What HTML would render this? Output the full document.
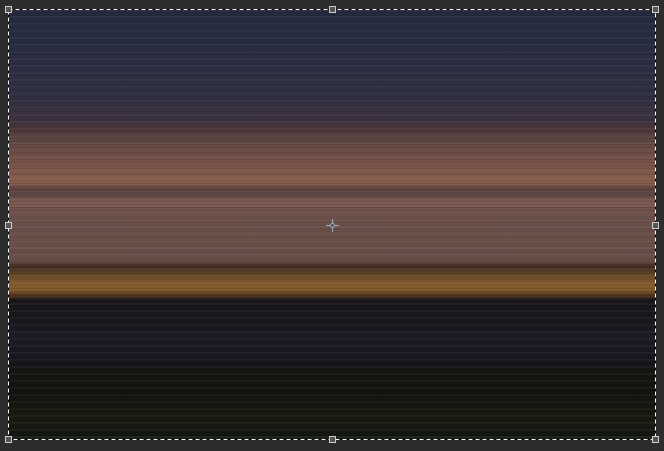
<!DOCTYPE html>
<html><head><style>
html,body{margin:0;padding:0;width:664px;height:451px;background:#2d2d2d;overflow:hidden}
#img{position:absolute;left:8px;top:9px;width:648px;height:431px;
background:linear-gradient(to bottom,
#252a3d 0px,#282c40 30px,#2c2d41 60px,#303043 85px,#36303f 100px,#3e3240 112px,#4a3638 120px,
#5c4642 130px,#6e4e46 145px,#7c5649 160px,#8a5e4f 172px,#7a5648 176px,#5a4340 180px,#5e4542 186px,
#74544c 190px,#7c5a52 194px,#70534c 200px,#6c504a 215px,#6a4e48 250px,#5a4038 254px,
#3e2c20 258px,#5a4026 263px,#6e4c2a 268px,#8a5e2e 276px,#7a5228 282px,#4a3218 287px,
#18161a 291px,#1a181e 310px,#1c1a24 330px,#18161e 350px,#131510 365px,#111410 385px,
#16170f 400px,#1a1a14 415px,#151610 425px,#1a2618 431px);}
#str{position:absolute;left:8px;top:9px;width:648px;height:431px;
background:
repeating-linear-gradient(to bottom,rgba(0,0,0,0.08) 0px,rgba(0,0,0,0.08) 1px,transparent 1px,transparent 3px),
repeating-linear-gradient(to bottom,rgba(255,255,255,0.04) 0px,rgba(255,255,255,0.04) 2px,transparent 2px,transparent 7px),
repeating-linear-gradient(to bottom,rgba(0,0,0,0.07) 0px,rgba(0,0,0,0.07) 1px,transparent 1px,transparent 11px);}
svg.b{position:absolute;left:0;top:0}
.h{position:absolute;width:5px;height:5px;border:1px solid #ccc;background:#555}
#cross{position:absolute;left:326px;top:219px;width:13px;height:13px}
</style></head><body>
<div id="img"></div>
<div id="str"></div>
<svg class="b" width="664" height="451"><rect x="8.5" y="9.5" width="647" height="430" fill="none" stroke="#000" stroke-width="1"/><rect x="8.5" y="9.5" width="647" height="430" fill="none" stroke="#fff" stroke-width="1" stroke-dasharray="4 3"/></svg>
<div class="h" style="left:5px;top:6px"></div>
<div class="h" style="left:329px;top:6px"></div>
<div class="h" style="left:652px;top:6px"></div>
<div class="h" style="left:5px;top:222px"></div>
<div class="h" style="left:652px;top:222px"></div>
<div class="h" style="left:5px;top:436px"></div>
<div class="h" style="left:329px;top:436px"></div>
<div class="h" style="left:652px;top:436px"></div>
<svg id="cross" viewBox="0 0 13 13"><g stroke="#9ab" stroke-width="1" fill="none">
<path d="M6.5 0V4M6.5 9V13M0 6.5H4M9 6.5H13"/><circle cx="6.5" cy="6.5" r="2"/></g></svg>
</body></html>
